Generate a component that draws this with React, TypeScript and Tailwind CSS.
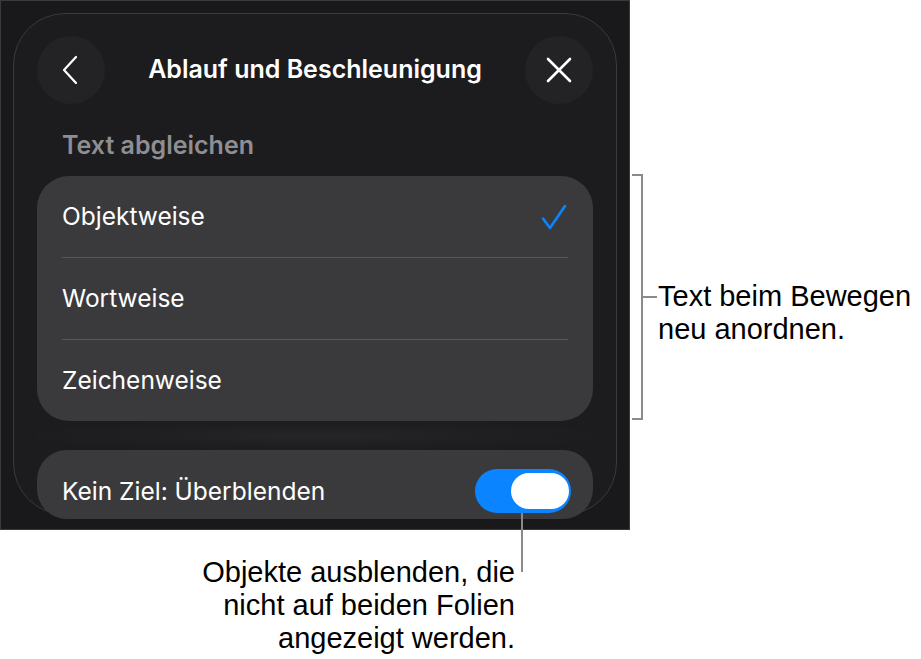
import React from "react";

const ui = { fontFamily: "Inter, 'Noto Sans', sans-serif" };
const ann = { fontFamily: "'Liberation Sans', Arial, sans-serif" };

function Row({ label, check }: { label: string; check?: boolean }) {
  return (
    <div className="flex h-[81px] items-center justify-between pl-[25px] pr-[25px]">
      <span className="text-[24.5px] text-white" style={ui}>{label}</span>
      {check && (
        <svg width="28" height="28" viewBox="0 0 28 28" fill="none">
          <path d="M3 15.5 L10 25 L25 3" stroke="#0a84ff" strokeWidth="2.6" strokeLinecap="round" strokeLinejoin="round" />
        </svg>
      )}
    </div>
  );
}

export default function App() {
  return (
    <div className="relative h-[659px] w-[921px] overflow-hidden bg-white">
      <div className="flex items-start">
        {/* Device frame */}
        <div className="h-[530px] w-[630px] shrink-0 border border-[#3a3a3c] bg-[#19191b] px-[12px] pt-[12px]">
          <div className="relative h-[502px] w-[604px] rounded-[52px] border border-[#3a3a3c] bg-[#1c1c1e] px-[23px] pt-[22px]">
            {/* Header */}
            <div className="flex h-[68px] items-center justify-between">
              <div className="flex h-[68px] w-[68px] items-center justify-center rounded-full bg-[#232325]">
                <svg width="20" height="30" viewBox="0 0 20 30" fill="none">
                  <path d="M15 2 L3 15 L15 28" stroke="white" strokeWidth="2.2" strokeLinecap="round" strokeLinejoin="round" />
                </svg>
              </div>
              <div className="text-[25px] font-semibold text-white" style={ui}>Ablauf und Beschleunigung</div>
              <div className="flex h-[68px] w-[68px] items-center justify-center rounded-full bg-[#232325]">
                <svg width="28" height="28" viewBox="0 0 28 28" fill="none">
                  <path d="M3 3 L25 25 M25 3 L3 25" stroke="white" strokeWidth="2.6" strokeLinecap="round" />
                </svg>
              </div>
            </div>
            {/* Section title */}
            <div className="mt-[27px] pl-[25px] text-[25px] font-semibold leading-[28px] text-[#8e8e93]" style={ui}>
              Text abgleichen
            </div>
            {/* Options card */}
            <div className="mt-[17px] rounded-[32px] bg-[#3a3a3c]">
              <Row label="Objektweise" check />
              <div className="mx-[25px] h-px bg-[#58585c]" />
              <Row label="Wortweise" />
              <div className="mx-[25px] h-px bg-[#58585c]" />
              <Row label="Zeichenweise" />
            </div>
            {/* Gap with soft glow */}
            <div className="h-[29px] bg-[radial-gradient(ellipse_at_center,#262628_0%,#1f1f21_45%,#1c1c1e_80%)]" />
            {/* Toggle card */}
            <div className="flex h-[69px] items-start justify-between rounded-[30px] bg-[#3a3a3c] pl-[25px] pr-[22px] pt-[19px]">
              <span className="flex h-[44px] items-center text-[24.5px] text-white" style={ui}>Kein Ziel: Überblenden</span>
              <div className="flex h-[44px] w-[96px] items-center justify-end rounded-full bg-[#0a84ff] pr-[2px]">
                <div className="h-[36px] w-[58px] rounded-full bg-white" />
              </div>
            </div>
          </div>
        </div>

        {/* Right annotation */}
        <div className="ml-[2px] flex items-start">
          <div className="mt-[174px] h-[246px] w-[11px] border-y-2 border-r-2 border-[#8a8a8a]" />
          <div className="mt-[296px] h-[2px] w-[14px] bg-[#8a8a8a]" />
          <div className="ml-px mt-[280px] text-[29px] leading-[33px] text-black" style={ann}>
            Text beim Bewegen
            <br />
            neu anordnen.
          </div>
        </div>
      </div>

      {/* Bottom annotation */}
      <div className="mt-[26px] w-[515px] text-right text-[29px] leading-[33px] text-black" style={ann}>
        Objekte ausblenden, die
        <br />
        nicht auf beiden Folien
        <br />
        angezeigt werden.
      </div>
      <div className="absolute left-[521px] top-[513px] h-[59px] w-[2px] bg-[#8a8a8a]" />
    </div>
  );
}
